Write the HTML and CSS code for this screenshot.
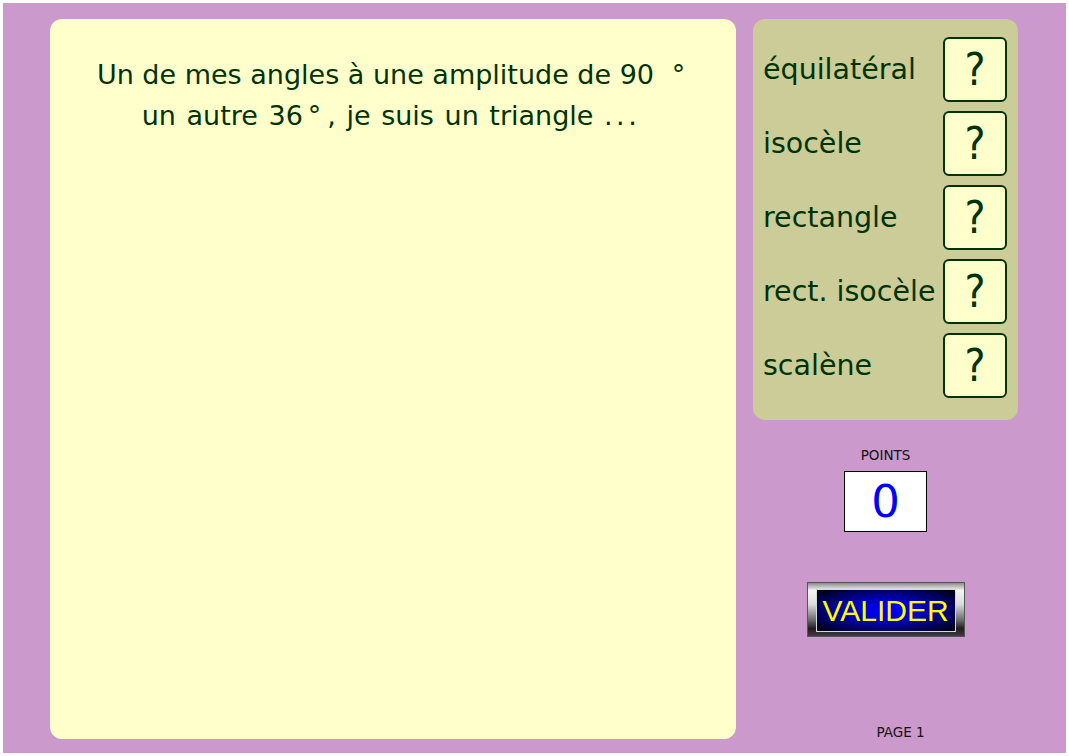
FILE: index.html
```html
<!DOCTYPE html>
<html lang="fr">
<head>
<meta charset="utf-8">
<title>Triangles</title>
<link rel="stylesheet" href="styles.css">
</head>
<body>
<div class="stage">
  <main class="board">
    <p class="question">Un de mes angles à une amplitude de 90 <span class="deg deg-end">°</span><br><span class="line2">un autre 36<span class="deg">°</span>, je suis un triangle <span class="dots">...</span></span></p>
  </main>
  <aside class="side">
    <div class="choices">
      <div class="choice"><span class="label">équilatéral</span><span class="qbox">?</span></div>
      <div class="choice"><span class="label">isocèle</span><span class="qbox">?</span></div>
      <div class="choice"><span class="label">rectangle</span><span class="qbox">?</span></div>
      <div class="choice"><span class="label">rect. isocèle</span><span class="qbox">?</span></div>
      <div class="choice"><span class="label">scalène</span><span class="qbox">?</span></div>
    </div>
    <div class="points-label">POINTS</div>
    <div class="points">0</div>
    <div class="validate"><span class="validate-inner">VALIDER</span></div>
    <div class="page">PAGE 1</div>
  </aside>
</div>
</body>
</html>
```
FILE: styles.css
```css
html, body {
  margin: 0;
  padding: 0;
  background: #ffffff;
}
body {
  font-family: "DejaVu Sans", Verdana, sans-serif;
}
.stage {
  margin: 3px;
  width: 1063px;
  height: 750px;
  background: #cc99cc;
  box-sizing: border-box;
  padding: 16px 0 0 47px;
  display: flex;
  align-items: flex-start;
  gap: 17px;
}
.board {
  width: 686px;
  height: 720px;
  background: #ffffcc;
  border-radius: 12px;
  box-sizing: border-box;
  padding-top: 35px;
}
.question {
  margin: 0;
  text-align: center;
  color: #003300;
  font-size: 27px;
  line-height: 41px;
  padding-right: 4px;
}
.deg {
  display: inline-block;
  margin: 0 6px 0 5px;
}
.deg.deg-end {
  margin: 0 0 0 9px;
}
.line2 {
  word-spacing: 2px;
}
.dots {
  letter-spacing: 3.5px;
}
.side {
  width: 265px;
  display: flex;
  flex-direction: column;
  align-items: center;
}
.choices {
  align-self: stretch;
  height: 401px;
  background: #cccc99;
  border-radius: 12px;
  box-sizing: border-box;
  padding: 18px 11px 0 10px;
  display: flex;
  flex-direction: column;
  gap: 9px;
}
.choice {
  height: 65px;
  display: flex;
  align-items: center;
  justify-content: space-between;
}
.label {
  color: #003300;
  font-size: 28.5px;
  white-space: nowrap;
}
.qbox {
  width: 64px;
  height: 65px;
  box-sizing: border-box;
  border: 2px solid #003300;
  border-radius: 6px;
  background: #ffffcc;
  color: #003300;
  font-family: "DejaVu Sans Condensed", "DejaVu Sans", sans-serif;
  font-size: 44px;
  line-height: 61px;
  text-align: center;
}
.points-label {
  margin-top: 27px;
  font-size: 13.5px;
  line-height: 16px;
  color: #111111;
}
.points {
  margin-top: 8px;
  width: 83px;
  height: 61px;
  box-sizing: border-box;
  border: 1px solid #000000;
  background: #ffffff;
  color: #0000ff;
  font-size: 45px;
  line-height: 59px;
  text-align: center;
}
.validate {
  margin-top: 50px;
  width: 158px;
  height: 55px;
  box-sizing: border-box;
  padding: 6px 8px 4px 8px;
  border: 1px solid #555555;
  background: linear-gradient(to bottom, #8c8c8c 0%, #f4f4f4 14%, #dcdcdc 40%, #6a6a6a 70%, #1e1e1e 86%, #4a3646 100%);
  display: flex;
}
.validate-inner {
  flex: 1;
  border: 1px solid #d8d8d8;
  background: radial-gradient(ellipse at center, #0000ff 0%, #0000c8 35%, #000050 75%, #000000 100%);
  color: #ffff00;
  font-family: "Liberation Sans", Arial, sans-serif;
  font-size: 30px;
  line-height: 41px;
  text-align: center;
}
.page {
  margin-top: 87px;
  font-size: 13.5px;
  line-height: 16px;
  color: #111111;
  padding-left: 30px;
}
```
